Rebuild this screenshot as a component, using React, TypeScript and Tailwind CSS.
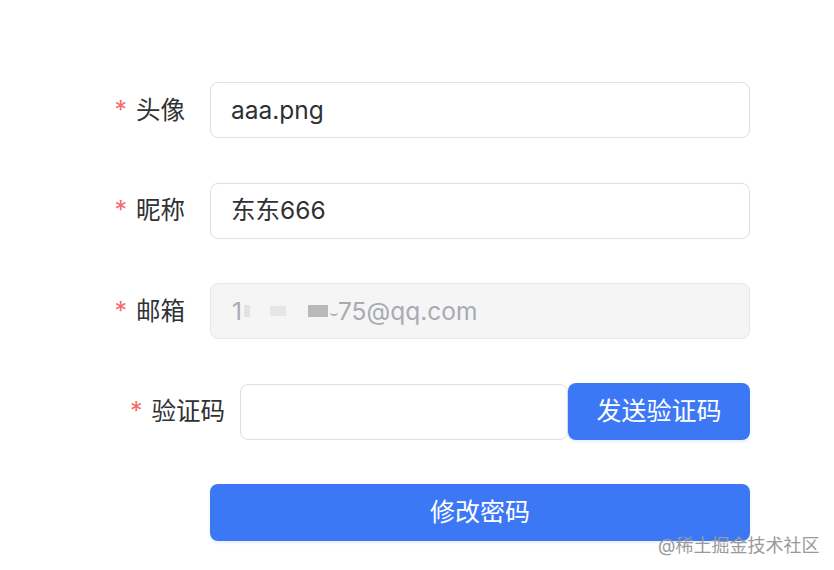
import React from "react";

const font = { fontFamily: 'Inter, "Noto Sans CJK SC", sans-serif' };

function Label({ text, width }: { text: string; width: string }) {
  return (
    <div className={`${width} flex shrink-0 items-center justify-end text-[24.5px] text-[#303133]`}>
      <span className="mr-[9px] text-[25px] leading-none text-[#f56c6c]">*</span>
      <span>{text}</span>
    </div>
  );
}

export default function App() {
  return (
    <div className="relative h-[570px] w-[834px] bg-white" style={font}>
      <div className="flex flex-col gap-[44.5px] pt-[82px]">
        <div className="flex h-[56px] items-center">
          <Label text="头像" width="w-[185px]" />
          <div className="ml-[25px] flex h-[56px] w-[540px] items-center rounded-[8px] border border-[#dcdfe6] bg-white pl-[20px] text-[24.5px] text-[#303133]">
            aaa.png
          </div>
        </div>
        <div className="flex h-[56px] items-center">
          <Label text="昵称" width="w-[185px]" />
          <div className="ml-[25px] flex h-[56px] w-[540px] items-center rounded-[8px] border border-[#dcdfe6] bg-white pl-[20px] text-[24.5px] text-[#303133]">
            东东666
          </div>
        </div>
        <div className="flex h-[56px] items-center">
          <Label text="邮箱" width="w-[185px]" />
          <div className="ml-[25px] flex h-[56px] w-[540px] items-center rounded-[8px] border border-[#e4e7ed] bg-[#f5f5f5] pl-[21px] text-[24.5px] text-[#a8abb2]">
            <span>1</span>
            <span className="ml-[2px] inline-block h-[12px] w-[6px] bg-[#e2e2e2]" />
            <span className="ml-[20px] inline-block h-[10px] w-[16px] bg-[#e6e6e6]" />
            <span className="ml-[22px] inline-block h-[12px] w-[20px] bg-[#b9b9b9]" />
            <span className="ml-[2px] inline-block h-[10px] w-[8px] rounded-b-full border-b-2 border-[#b0b3b8]" />
            <span>75@qq.com</span>
          </div>
        </div>
        <div className="flex h-[56px] items-center">
          <Label text="验证码" width="w-[225px]" />
          <div className="ml-[15px] h-[56px] w-[328px] rounded-[8px] border border-[#dcdfe6] bg-white" />
          <button className="flex h-[57px] w-[182px] items-center justify-center rounded-[8px] bg-[#3c78f6] text-[25px] text-white shadow-[0_2px_3px_rgba(60,120,246,0.12)]">
            发送验证码
          </button>
        </div>
        <div className="flex h-[57px] items-center">
          <button className="ml-[210px] flex h-[57px] w-[540px] items-center justify-center rounded-[8px] bg-[#3c78f6] text-[25px] text-white shadow-[0_2px_3px_rgba(60,120,246,0.12)]">
            修改密码
          </button>
        </div>
      </div>
      <div className="absolute left-[658px] top-[532px] text-[18px] text-[#9a9a9a]">@稀土掘金技术社区</div>
    </div>
  );
}
